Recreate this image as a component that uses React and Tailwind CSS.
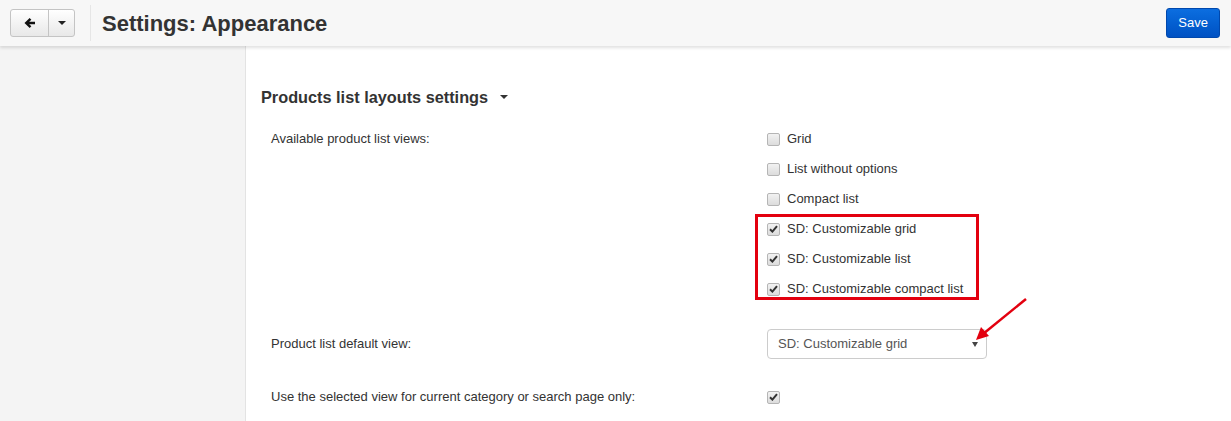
import React from "react";

const Box = ({ checked }) => (
  <span className="w-[13px] h-[13px] rounded-[2px] border border-[#b5b5b5] bg-gradient-to-b from-[#f2f2f2] to-[#dcdcdc] flex items-center justify-center shrink-0">
    {checked && (
      <svg width="9" height="8" viewBox="0 0 9 8">
        <path d="M1 4.2 L3.4 6.6 L8 1.2" stroke="#333" strokeWidth="2" fill="none" />
      </svg>
    )}
  </span>
);

const Option = ({ label, checked }) => (
  <label className="flex items-center gap-[7px] h-[30px] text-[13px] text-[#333] whitespace-nowrap">
    <Box checked={checked} />
    {label}
  </label>
);

export default function App() {
  return (
    <div className="w-[1231px] h-[421px] overflow-hidden bg-white font-['Liberation_Sans',Arial,sans-serif] text-[#333] flex flex-col">
      <div className="h-[46px] shrink-0 bg-[#f7f7f7] shadow-[0_2px_3px_rgba(0,0,0,0.12)] relative z-10 flex items-center pl-[10px] pr-[11px]">
        <div className="flex h-[28px] rounded-[3px] border border-[#c4c4c4] bg-gradient-to-b from-white to-[#e8e8e8]">
          <button className="w-[38px] flex items-center justify-center border-r border-[#c4c4c4]">
            <svg width="12" height="12" viewBox="0 0 12 12">
              <path d="M11 6 H2.5 M6.5 1.8 L2.2 6 L6.5 10.2" stroke="#111" strokeWidth="2.4" fill="none" />
            </svg>
          </button>
          <button className="w-[25px] flex items-center justify-center">
            <span className="border-x-[4px] border-x-transparent border-t-[4px] border-t-[#222]" />
          </button>
        </div>
        <div className="w-px h-[36px] bg-[#e6e6e6] ml-[15px] mr-[11px]" />
        <h1 className="text-[22px] font-bold text-[#333]">Settings: Appearance</h1>
        <button className="ml-auto h-[30px] px-[11px] rounded-[3px] bg-gradient-to-b from-[#0c6ee0] to-[#0051c3] border border-[#0048ad] text-white text-[13px]">
          Save
        </button>
      </div>
      <div className="flex flex-1">
        <div className="w-[246px] bg-[#f4f4f4] border-r border-[#e3e3e3]" />
        <div className="flex-1 relative pl-[15px] pt-[40px]">
          <div className="flex items-center gap-[12px] h-[22px]">
            <h2 className="text-[16.3px] font-bold text-[#333]">Products list layouts settings</h2>
            <span className="border-x-[4px] border-x-transparent border-t-[4px] border-t-[#333]" />
          </div>
          <div className="pl-[10px] mt-[14px]">
            <div className="flex">
              <div className="w-[496px] text-[13px] pt-[7px]">Available product list views:</div>
              <div className="flex flex-col mt-[2px]">
                <Option label="Grid" />
                <Option label="List without options" />
                <Option label="Compact list" />
                <div className="relative">
                  <div className="absolute -left-[12px] top-[0px] bottom-[4px] w-[224px] border-[3px] border-[#e3000f]" />
                  <Option label="SD: Customizable grid" checked />
                  <Option label="SD: Customizable list" checked />
                  <Option label="SD: Customizable compact list" checked />
                </div>
              </div>
            </div>
            <div className="flex items-center mt-[25px]">
              <div className="w-[496px] text-[13px]">Product list default view:</div>
              <div className="w-[220px] h-[30px] rounded-[4px] border border-[#ccc] flex items-center pl-[10px] text-[13px] text-[#555] relative">
                SD: Customizable grid
                <span className="absolute right-[8px] top-[12px] border-x-[3px] border-x-transparent border-t-[5px] border-t-[#444]" />
              </div>
            </div>
            <div className="flex items-center h-[30px] mt-[23px]">
              <div className="w-[496px] text-[13px]">Use the selected view for current category or search page only:</div>
              <Box checked />
            </div>
          </div>
          <svg className="absolute left-[726px] top-[251px]" width="60" height="50" viewBox="0 0 60 50">
            <path d="M54 2 L11 37" stroke="#e3000f" strokeWidth="2.5" fill="none" />
            <path d="M4 43 L9 30 L17 39 Z" fill="#e3000f" />
          </svg>
        </div>
      </div>
    </div>
  );
}
